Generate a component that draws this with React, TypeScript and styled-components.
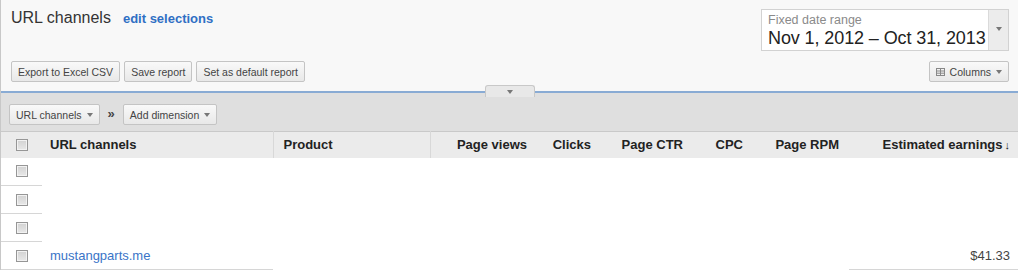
import styled, { createGlobalStyle } from "styled-components";

const GlobalStyle = createGlobalStyle`
  * { box-sizing: border-box; }
  body {
    margin: 0;
    background: #fff;
    font-family: "Liberation Sans", Arial, sans-serif;
  }
`;

const Page = styled.div`
  width: 1018px;
  border-left: 1px solid #c8c8c8;
  color: #333;
`;

const TopPanel = styled.div`
  position: relative;
  height: 93px;
  padding: 8px 9px 9px 10px;
  display: flex;
  justify-content: space-between;
  background: #f8f8f8;
  border-bottom: 2px solid #89abd4;
`;

const Column = styled.div<{ $end?: boolean }>`
  display: flex;
  flex-direction: column;
  justify-content: space-between;
  align-items: ${(p) => (p.$end ? "flex-end" : "flex-start")};
`;

const TitleRow = styled.div`
  display: flex;
  align-items: baseline;
  gap: 12px;
  line-height: 20px;
`;

const Title = styled.h1`
  margin: 0;
  font-size: 16px;
  font-weight: normal;
  color: #333;
`;

const EditLink = styled.a`
  font-size: 13px;
  font-weight: bold;
  color: #2f6fc4;
  text-decoration: none;
`;

const ButtonRow = styled.div`
  display: flex;
  gap: 4px;
`;

const Button = styled.button`
  height: 21px;
  padding: 0 6px;
  display: inline-flex;
  align-items: center;
  gap: 5px;
  border: 1px solid #c4c4c4;
  border-radius: 2px;
  background: linear-gradient(#f9f9f9, #e8e8e8);
  font-family: inherit;
  font-size: 10.5px;
  color: #444;
  white-space: nowrap;
`;

const Caret = styled.span`
  display: inline-block;
  width: 0;
  height: 0;
  border-left: 3.5px solid transparent;
  border-right: 3.5px solid transparent;
  border-top: 4px solid #777;
`;

const DateBox = styled.div`
  margin-top: 1px;
  width: 248px;
  height: 42px;
  display: flex;
  background: #fff;
  border: 1px solid #d2d2d2;
`;

const DateMain = styled.div`
  flex: 1;
  padding: 3px 0 0 6px;
  white-space: nowrap;
  overflow: hidden;
`;

const DateLabel = styled.div`
  font-size: 12.5px;
  line-height: 15px;
  color: #8a8a8a;
`;

const DateValue = styled.div`
  font-size: 18px;
  line-height: 21px;
  letter-spacing: -0.1px;
  color: #222;
`;

const DateToggle = styled.div`
  width: 20px;
  flex-shrink: 0;
  display: flex;
  align-items: center;
  justify-content: center;
  padding-bottom: 2px;
  background: #ececec;
  border-left: 1px solid #dadada;
`;

const FoldTab = styled.div`
  position: absolute;
  left: 484px;
  bottom: -6px;
  width: 50px;
  height: 12px;
  display: flex;
  justify-content: center;
  padding-top: 4px;
  background: #e8e8e8;
  border: 1px solid #c8c8c8;
  border-bottom: none;
  border-radius: 3px 3px 0 0;
`;

const Toolbar = styled.div`
  height: 38px;
  padding: 11px 8px 0;
  display: flex;
  align-items: flex-start;
  gap: 8px;
  background: #dfdfdf;
`;

const Chevrons = styled.span`
  line-height: 20px;
  font-size: 13px;
  font-weight: bold;
  color: #444;
`;

const Table = styled.table`
  width: 1017px;
  table-layout: fixed;
  border-collapse: collapse;
`;

const HeadRow = styled.tr`
  height: 26px;
  background: #ebebeb;
  border-top: 1px solid #c9c9c9;
`;

const Th = styled.th<{ $num?: boolean; $divider?: boolean; $pad?: number }>`
  padding: 0 ${(p) => p.$pad ?? 10}px 0 ${(p) => p.$pad ?? 10}px;
  text-align: ${(p) => (p.$num ? "right" : "left")};
  font-size: 13px;
  font-weight: bold;
  color: #222;
  white-space: nowrap;
  border-left: ${(p) => (p.$divider ? "1px solid #d8d8d8" : "none")};
`;

const Row = styled.tr`
  height: 28px;
`;

const Td = styled.td<{ $num?: boolean; $line?: boolean; $pad?: number }>`
  padding: 0 ${(p) => p.$pad ?? 8}px;
  text-align: ${(p) => (p.$num ? "right" : "left")};
  font-size: 13px;
  color: #444;
  border-bottom: ${(p) => (p.$line ? "1px solid #d6d6d6" : "none")};
`;

const CheckCell = styled.td`
  padding: 0 0 0 15px;
  border-bottom: 1px solid #d6d6d6;
`;

const CheckBox = styled.span`
  display: block;
  width: 12px;
  height: 12px;
  border: 1px solid #969696;
  background: linear-gradient(#d2d2d2, #e8e8e8);
  box-shadow: inset 0 0 0 1px #f2f2f2;
`;

const ChannelLink = styled.a`
  color: #3a74c7;
  text-decoration: none;
`;

const SortArrow = styled.span`
  font-size: 11px;
  margin-left: 2px;
`;

const GridIcon = () => (
  <svg width="9" height="8" viewBox="0 0 9 8">
    <rect x="0.5" y="0.5" width="8" height="7" fill="none" stroke="#888" />
    <line x1="0.5" y1="3" x2="8.5" y2="3" stroke="#888" />
    <line x1="0.5" y1="5.2" x2="8.5" y2="5.2" stroke="#888" />
    <line x1="4.5" y1="0.5" x2="4.5" y2="7.5" stroke="#888" />
  </svg>
);

const rows = ["", "", "", "mustangparts.me"];

export default function App() {
  return (
    <>
      <GlobalStyle />
      <Page>
        <TopPanel>
          <Column>
            <TitleRow>
              <Title>URL channels</Title>
              <EditLink href="#">edit selections</EditLink>
            </TitleRow>
            <ButtonRow>
              <Button>Export to Excel CSV</Button>
              <Button>Save report</Button>
              <Button>Set as default report</Button>
            </ButtonRow>
          </Column>
          <Column $end>
            <DateBox>
              <DateMain>
                <DateLabel>Fixed date range</DateLabel>
                <DateValue>Nov 1, 2012 – Oct 31, 2013</DateValue>
              </DateMain>
              <DateToggle>
                <Caret />
              </DateToggle>
            </DateBox>
            <Button>
              <GridIcon />
              Columns
              <Caret />
            </Button>
          </Column>
          <FoldTab>
            <Caret />
          </FoldTab>
        </TopPanel>
        <Toolbar>
          <Button>
            URL channels <Caret />
          </Button>
          <Chevrons>»</Chevrons>
          <Button>
            Add dimension <Caret />
          </Button>
        </Toolbar>
        <Table>
          <colgroup>
            <col style={{ width: 41 }} />
            <col style={{ width: 231 }} />
            <col style={{ width: 157 }} />
            <col style={{ width: 107 }} />
            <col style={{ width: 64 }} />
            <col style={{ width: 92 }} />
            <col style={{ width: 60 }} />
            <col style={{ width: 96 }} />
            <col style={{ width: 169 }} />
          </colgroup>
          <thead>
            <HeadRow>
              <Th $pad={0} style={{ paddingLeft: 15 }}>
                <CheckBox />
              </Th>
              <Th $pad={8}>URL channels</Th>
              <Th $divider>Product</Th>
              <Th $num $divider>Page views</Th>
              <Th $num>Clicks</Th>
              <Th $num>Page CTR</Th>
              <Th $num>CPC</Th>
              <Th $num>Page RPM</Th>
              <Th $num $pad={8}>
                Estimated earnings<SortArrow>↓</SortArrow>
              </Th>
            </HeadRow>
          </thead>
          <tbody>
            {rows.map((name, i) => {
              const last = i === rows.length - 1;
              return (
                <Row key={i}>
                  <CheckCell>
                    <CheckBox />
                  </CheckCell>
                  <Td $line={last}>
                    {name && <ChannelLink href="#">{name}</ChannelLink>}
                  </Td>
                  <Td />
                  <Td />
                  <Td />
                  <Td />
                  <Td />
                  <Td />
                  <Td $num $line={last}>
                    {last ? "$41.33" : ""}
                  </Td>
                </Row>
              );
            })}
          </tbody>
        </Table>
      </Page>
    </>
  );
}
